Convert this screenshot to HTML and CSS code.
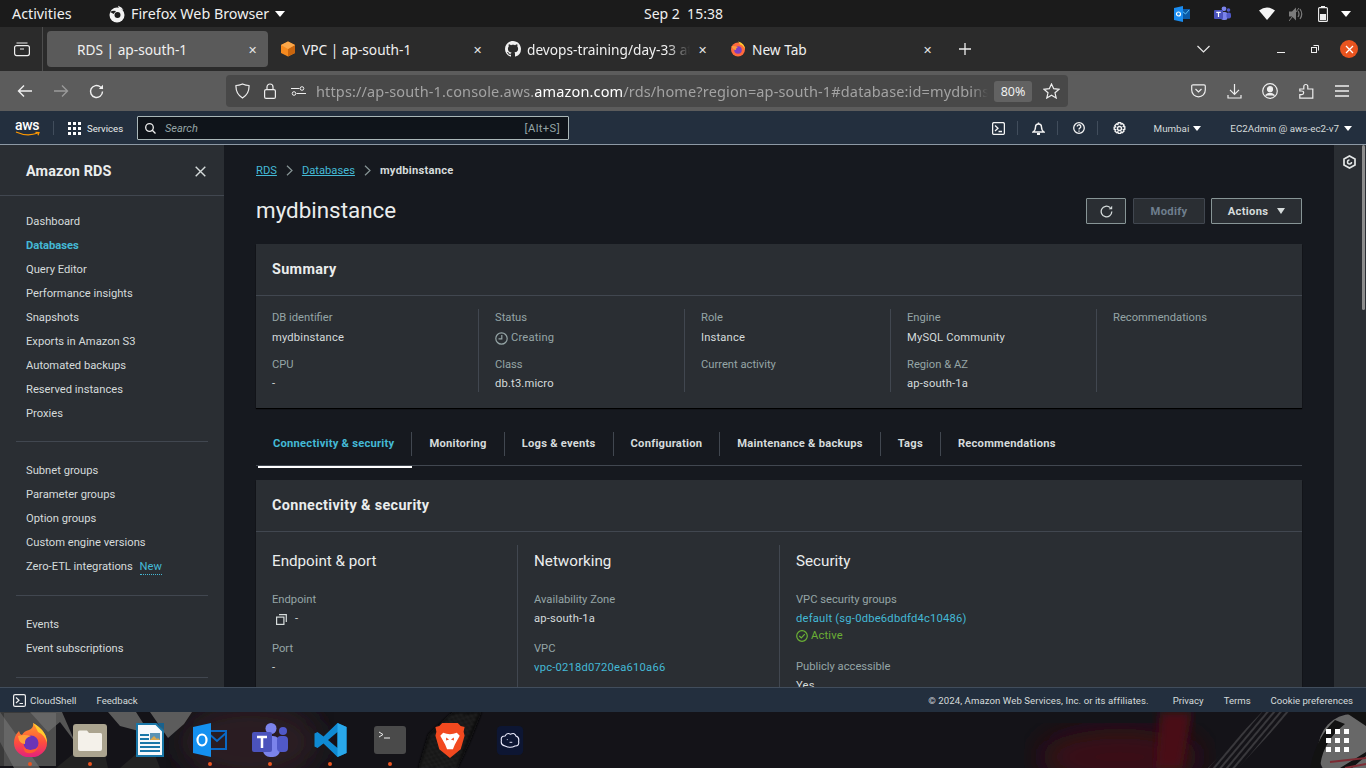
FILE: index.html
```html
<!DOCTYPE html>
<html lang="en">
<head>
    <meta charset="UTF-8">
    <title>RDS | ap-south-1</title>
    <link rel="stylesheet" href="styles.css">
</head>
<body>

<div class="topbar">
    <span class="activities">Activities</span>
    <span class="app-menu">
        <svg width="18" height="18" viewBox="0 0 18 18"><circle cx="9" cy="10" r="7.500" fill="#f2f2f2"/><circle cx="9.500" cy="10" r="3" fill="#1b1b1b"/><path d="M2 7 Q5 5 8 6 L5.500 9 L4 8z" fill="#1b1b1b"/><path d="M10 .8 Q14 2 15.500 5 L11 3.500z" fill="#f2f2f2"/></svg>
        Firefox Web Browser
        <i class="caret caret-top"></i>
    </span>
    <span class="clock">Sep 2&nbsp; 15:38</span>
    <span class="tray">
        <svg class="tray-outlook" width="16" height="16" viewBox="0 0 16 16"><rect x="6" y="3" width="10" height="10" fill="#0a5aa8"/><path d="M7 4 L11.500 8 L15 4" fill="none" stroke="#5cc0f5"/><path d="M0 2 L9 0 V16 L0 14z" fill="#1a8cf0"/><circle cx="4.500" cy="8" r="2" fill="none" stroke="#fff" stroke-width="1.200"/></svg>
        <svg class="tray-teams" width="17" height="16" viewBox="0 0 17 16"><circle cx="10" cy="2.800" r="2.400" fill="#7b83eb"/><circle cx="14.500" cy="4" r="1.800" fill="#5059c9"/><rect x="7" y="6" width="6.500" height="8" rx="2.500" fill="#7b83eb"/><rect x="12.500" y="6.500" width="4.500" height="6" rx="2" fill="#5059c9"/><rect x="0" y="4" width="9" height="9" rx="1" fill="#4b53bc"/><path d="M2.300 6.300h4.400M4.500 6.300v4.800" stroke="#fff" stroke-width="1.200"/></svg>
        <svg class="tray-wifi" width="16" height="13" viewBox="0 0 16 13"><path d="M0 3.600 Q8 -2.400 16 3.600 L8 13z" fill="#f4f4f4"/></svg>
        <svg class="tray-vol" width="15" height="14" viewBox="0 0 15 14"><path d="M0 4.500h3l4-4v13l-4-4H0z" fill="#7c7c7c"/><path d="M9 4 Q11 7 9 10M11 2 Q14.500 7 11 12" fill="none" stroke="#7c7c7c" stroke-width="1.200"/><path d="M0 14 L10 1" stroke="#7c7c7c"/></svg>
        <svg class="tray-batt" width="10" height="16" viewBox="0 0 10 16"><rect x="3" y="0" width="4" height="2" fill="#eee"/><rect x=".6" y="1.600" width="8.800" height="13.800" rx="1" fill="none" stroke="#eee" stroke-width="1.100"/><rect x="2" y="8" width="6" height="6" fill="#eee"/></svg>
        <i class="caret caret-top tray-caret"></i>
    </span>
</div>

<div class="tabbar">
    <span class="tab-view">
        <svg width="16" height="16" viewBox="0 0 16 16" fill="none" stroke="#eee" stroke-width="1.200"><rect x=".6" y="4.600" width="14.800" height="10" rx="2"/><path d="M2.500 2h11M6 8h4"/></svg>
    </span>
    <div class="tab tab-active"><span class="tab-title tab-title-rds">RDS | ap-south-1</span><span class="tab-x">&#x2715;</span></div>
    <div class="tab">
        <svg class="favicon" width="16" height="16" viewBox="0 0 16 16"><path d="M8 .5 L15 4 V12 L8 15.500 L1 12 V4z" fill="#f58a1f"/><path d="M8 8 L15 4 V12 L8 15.500z" fill="#c9650e"/><path d="M8 8 L1 4 L8 .5 L15 4z" fill="#fba74a"/></svg>
        <span class="tab-title">VPC | ap-south-1</span><span class="tab-x">&#x2715;</span>
    </div>
    <div class="tab">
        <svg class="favicon" width="16" height="16" viewBox="0 0 16 16"><path fill="#f0f0f0" d="M8 0C3.580 0 0 3.580 0 8c0 3.540 2.290 6.530 5.470 7.590.4.070.55-.17.55-.38 0-.19-.01-.82-.01-1.490-2.010.37-2.530-.49-2.690-.94-.09-.23-.48-.94-.82-1.130-.28-.15-.68-.52-.01-.53.63-.01 1.080.58 1.230.82.72 1.210 1.870.87 2.330.66.070-.52.280-.87.510-1.070-1.780-.2-3.640-.89-3.640-3.950 0-.87.310-1.590.820-2.150-.08-.2-.36-1.020.08-2.120 0 0 .67-.21 2.200.82.640-.18 1.320-.27 2-.27s1.360.09 2 .27c1.530-1.040 2.200-.82 2.200-.82.440 1.100.160 1.920.080 2.120.510.560.820 1.270.820 2.150 0 3.070-1.870 3.750-3.650 3.950.290.250.540.730.540 1.480 0 1.070-.01 1.930-.01 2.200 0 .210.150.460.550.380A8.010 8.010 0 0 0 16 8c0-4.420-3.580-8-8-8z"/></svg>
        <span class="tab-title tab-fade">devops-training/day-33 at main</span><span class="tab-x">&#x2715;</span>
    </div>
    <div class="tab">
        <svg class="favicon" width="16" height="16" viewBox="0 0 16 16"><circle cx="8" cy="8.500" r="7" fill="#ff6a3c"/><path d="M8 .5 Q14.500 2 15 8.500 Q13 4 10 3.500 Q9.500 2 8 .5z" fill="#ffcb2e"/><circle cx="8" cy="9" r="3.800" fill="#7d3fc2"/><path d="M1.500 5 Q5 4.500 8 6 Q5.500 7 6 9 Q2.500 9 1.500 5z" fill="#ff9a3d"/></svg>
        <span class="tab-title">New Tab</span><span class="tab-x">&#x2715;</span>
    </div>
    <svg class="tab-plus" width="12" height="12" viewBox="0 0 12 12"><path d="M6 0v12M0 6h12" stroke="#eee" stroke-width="1.300"/></svg>
    <svg class="tab-list" width="13" height="8" viewBox="0 0 13 8"><path d="M.5 1 L6.500 7 L12.500 1" fill="none" stroke="#e8e8e8" stroke-width="1.200"/></svg>
    <span class="win-min"></span>
    <svg class="win-max" width="8" height="8" viewBox="0 0 8 8" fill="none" stroke="#eee"><rect x=".5" y="2.500" width="5" height="5"/><path d="M2.500 .5h5v5"/></svg>
    <span class="win-close"><svg width="9" height="9" viewBox="0 0 9 9"><path d="M1 1l7 7M8 1l-7 7" stroke="#fff" stroke-width="1.300"/></svg></span>
</div>

<div class="toolbar">
    <svg class="nav-icon" width="16" height="14" viewBox="0 0 16 14" fill="none" stroke="#f0f0f0" stroke-width="1.400"><path d="M15 7H1.500M7 1.500 L1.500 7 L7 12.500"/></svg>
    <svg class="nav-icon nav-forward" width="16" height="14" viewBox="0 0 16 14" fill="none" stroke="#9a9a9a" stroke-width="1.400"><path d="M1 7h13.500M9 1.500 L14.500 7 L9 12.500"/></svg>
    <svg class="nav-icon nav-reload" width="15" height="15" viewBox="0 0 15 15" fill="none" stroke="#f0f0f0" stroke-width="1.400"><path d="M13.500 7.500A6 6 0 1 1 11.500 3L13.800 4.800"/><path d="M14 .8V5H9.800" fill="#f0f0f0" stroke="none"/></svg>
    <div class="urlbar">
        <svg class="url-shield" width="15" height="16" viewBox="0 0 15 16" fill="none" stroke="#eee" stroke-width="1.200"><path d="M7.500 1 Q11 2.500 14 2.500 Q14.500 11 7.500 15 Q.5 11 1 2.500 Q4 2.500 7.500 1z"/></svg>
        <svg class="url-lock" width="12" height="16" viewBox="0 0 12 16" fill="none" stroke="#eee" stroke-width="1.200"><rect x=".6" y="6.600" width="10.800" height="8.800" rx="1.500"/><path d="M3 6.500V4a3 3 0 0 1 6 0v2.500"/></svg>
        <svg class="url-perm" width="15" height="10" viewBox="0 0 15 10" fill="none" stroke="#eee"><circle cx="11" cy="2.500" r="1.800"/><circle cx="3" cy="7.500" r="1.800"/><path d="M0 2.500h8.500M5.500 7.500H15"/></svg>
        <span class="url-text">https://ap-south-1.console.aws.<b>amazon.com</b>/rds/home?region=ap-south-1#database:id=mydbinstance</span>
        <span class="zoom-level">80%</span>
        <svg class="url-star" width="17" height="16" viewBox="0 0 17 16" fill="none" stroke="#eee" stroke-width="1.200"><path d="M8.500 1 L10.700 5.700 L16 6.300 L12 9.800 L13.200 15 L8.500 12.300 L3.800 15 L5 9.800 L1 6.300 L6.300 5.700z"/></svg>
    </div>
    <div class="toolbar-right">
        <svg width="15" height="14" viewBox="0 0 15 14" fill="none" stroke="#eee" stroke-width="1.200"><path d="M2 .8h11a1.300 1.300 0 0 1 1.300 1.300V6A6.800 6.800 0 0 1 .7 6V2.100A1.300 1.300 0 0 1 2 .8z"/><path d="M4.500 5 L7.500 8 L10.500 5"/></svg>
        <svg width="15" height="15" viewBox="0 0 15 15" fill="none" stroke="#eee" stroke-width="1.200"><path d="M7.500 0v10M3 5.800 L7.500 10.300 L12 5.800M1 11v3h13v-3"/></svg>
        <svg width="16" height="16" viewBox="0 0 16 16" fill="none" stroke="#eee" stroke-width="1.200"><circle cx="8" cy="8" r="7.300"/><circle cx="8" cy="6.200" r="2.500" fill="#eee"/><path d="M3.500 12.500 Q8 8.500 12.500 12.500" fill="#eee"/></svg>
        <svg width="15" height="16" viewBox="0 0 15 16" fill="none" stroke="#eee" stroke-width="1.200"><path d="M.8 6h4V3.500a2 2 0 0 1 4 0V6h5v9.200H.8v-3.500h2a1.800 1.800 0 0 0 0-3.700h-2z"/></svg>
        <svg width="14" height="12" viewBox="0 0 14 12" stroke="#eee" stroke-width="1.300"><path d="M0 1h14M0 6h14M0 11h14"/></svg>
    </div>
</div>

<div class="awsnav">
    <span class="aws-logo">
        <span class="aws-word">aws</span>
        <svg width="26" height="6" viewBox="0 0 26 6" fill="none" stroke="#ff9900" stroke-width="1.200"><path d="M1 1 Q12 6 23 2"/><path d="M20.500 1.300 L24 1.500 L23 4.300"/></svg>
    </span>
    <span class="aws-sep"></span>
    <svg class="services-icon" width="13" height="13" viewBox="0 0 13 13" fill="#fff"><path d="M0 0h3v3H0zM5 0h3v3H5zM10 0h3v3h-3zM0 5h3v3H0zM5 5h3v3H5zM10 5h3v3h-3zM0 10h3v3H0zM5 10h3v3H5zM10 10h3v3h-3z"/></svg>
    <span class="services">Services</span>
    <div class="searchbox">
        <svg width="11" height="11" viewBox="0 0 11 11" fill="none" stroke="#eee" stroke-width="1.300"><circle cx="4.500" cy="4.500" r="3.800"/><path d="M7.300 7.300 L10.500 10.500"/></svg>
        <span class="search-hint">Search</span>
        <span class="search-key">[Alt+S]</span>
    </div>
    <div class="aws-right">
        <svg class="aws-icon" width="13" height="13" viewBox="0 0 13 13" fill="none" stroke="#f4f4f4" stroke-width="1.300"><rect x=".6" y=".6" width="11.800" height="11.800" rx="1.500"/><path d="M3 3.500 L6 6.200 L3 9M6.500 9.500h3.500"/></svg>
        <span class="aws-vsep"></span>
        <svg class="aws-icon" width="13" height="13" viewBox="0 0 13 13" fill="none" stroke="#f4f4f4" stroke-width="1.400"><path d="M1 10 Q3.500 8.500 3.500 5a3 3 0 0 1 6 0Q9.500 8.500 12 10z"/><path d="M5 11h3v2H5z" fill="#f4f4f4" stroke="none"/><path d="M6.500 .5v1.500"/></svg>
        <span class="aws-vsep aws-vsep-wide"></span>
        <svg class="aws-icon" width="12" height="12" viewBox="0 0 12 12" fill="none" stroke="#f4f4f4" stroke-width="1.300"><circle cx="6" cy="6" r="5.300"/><path d="M4.200 4.600a1.800 1.800 0 1 1 2.600 1.600Q6 6.600 6 7.500M6 8.500v1.200"/></svg>
        <span class="aws-vsep aws-vsep-wide"></span>
        <svg class="aws-icon" width="13" height="13" viewBox="0 0 13 13" fill="none" stroke="#f4f4f4" stroke-width="1.400"><circle cx="6.500" cy="6.500" r="2"/><path d="M5.300 .7h2.400l.4 1.500 1.300-.7 1.700 1.700-.8 1.300 1.500.4v2.400l-1.500.4.800 1.300-1.700 1.700-1.300-.8-.4 1.500H5.300l-.4-1.500-1.300.8-1.700-1.700.8-1.300-1.500-.4V5.200l1.500-.4-.8-1.300 1.700-1.700 1.300.7z"/></svg>
        <span class="aws-region">Mumbai</span><i class="caret caret-nav"></i>
        <span class="aws-user">EC2Admin @ aws-ec2-v7</span><i class="caret caret-nav"></i>
    </div>
</div>

<div class="console">
    <aside class="sidebar">
        <div class="side-head">
            <span>Amazon RDS</span>
            <svg width="11" height="11" viewBox="0 0 11 11"><path d="M.7.7l9.600 9.600M10.300.7L.7 10.300" stroke="#d5dbdb" stroke-width="1.400"/></svg>
        </div>
        <ul class="side-group">
            <li>Dashboard</li>
            <li class="side-active">Databases</li>
            <li>Query Editor</li>
            <li>Performance insights</li>
            <li>Snapshots</li>
            <li>Exports in Amazon S3</li>
            <li>Automated backups</li>
            <li>Reserved instances</li>
            <li>Proxies</li>
        </ul>
        <ul class="side-group side-group-mid">
            <li>Subnet groups</li>
            <li>Parameter groups</li>
            <li>Option groups</li>
            <li>Custom engine versions</li>
            <li>Zero-ETL integrations <span class="side-new">New</span></li>
        </ul>
        <ul class="side-group side-group-mid">
            <li>Events</li>
            <li>Event subscriptions</li>
        </ul>
    </aside>

    <main class="content">
        <div class="breadcrumb">
            <a>RDS</a>
            <svg width="7" height="11" viewBox="0 0 7 11" fill="none" stroke="#879596" stroke-width="1.200"><path d="M1 .7 L6 5.500 L1 10.300"/></svg>
            <a>Databases</a>
            <svg width="7" height="11" viewBox="0 0 7 11" fill="none" stroke="#879596" stroke-width="1.200"><path d="M1 .7 L6 5.500 L1 10.300"/></svg>
            <b>mydbinstance</b>
        </div>

        <div class="page-head">
            <h1>mydbinstance</h1>
            <div class="page-actions">
                <button class="btn btn-icon"><svg width="13" height="13" viewBox="0 0 13 13" fill="none" stroke="#d5dbdb" stroke-width="1.300"><path d="M11.800 6.500A5.300 5.300 0 1 1 10 2.500"/><path d="M12.200 .7V4.200H8.700" fill="#d5dbdb" stroke="none"/></svg></button>
                <button class="btn btn-disabled">Modify</button>
                <button class="btn btn-actions">Actions <i class="caret caret-btn"></i></button>
            </div>
        </div>

        <section class="card summary">
            <h2 class="card-title">Summary</h2>
            <div class="summary-cols">
                <div class="sum-col sum-col-first">
                    <label>DB identifier</label><p>mydbinstance</p>
                    <label>CPU</label><p>-</p>
                </div>
                <div class="sum-col sum-col-status">
                    <label>Status</label>
                    <p class="status-creating"><svg width="13" height="13" viewBox="0 0 13 13" fill="none" stroke="#95a5a6" stroke-width="1.200"><circle cx="6.500" cy="6.500" r="5.700"/><path d="M6.800 3v3.800H3.500"/></svg>Creating</p>
                    <label>Class</label><p>db.t3.micro</p>
                </div>
                <div class="sum-col sum-col-role">
                    <label>Role</label><p>Instance</p>
                    <label>Current activity</label>
                </div>
                <div class="sum-col sum-col-engine">
                    <label>Engine</label><p>MySQL Community</p>
                    <label>Region &amp; AZ</label><p>ap-south-1a</p>
                </div>
                <div class="sum-col sum-col-last">
                    <label>Recommendations</label>
                </div>
            </div>
        </section>

        <nav class="tabs">
            <a class="tabs-item tabs-selected">Connectivity &amp; security</a>
            <a class="tabs-item">Monitoring</a>
            <a class="tabs-item">Logs &amp; events</a>
            <a class="tabs-item">Configuration</a>
            <a class="tabs-item">Maintenance &amp; backups</a>
            <a class="tabs-item">Tags</a>
            <a class="tabs-item">Recommendations</a>
        </nav>

        <section class="card">
            <h2 class="card-title">Connectivity &amp; security</h2>
            <div class="conn-cols">
                <div class="conn-col">
                    <h3>Endpoint &amp; port</h3>
                    <label>Endpoint</label>
                    <p class="endpoint"><svg width="11" height="11" viewBox="0 0 11 11" fill="none" stroke="#d5dbdb" stroke-width="1.200"><rect x=".6" y="3.100" width="7.300" height="7.300"/><path d="M3 .7h7.300V8"/></svg>-</p>
                    <label>Port</label><p>-</p>
                </div>
                <div class="conn-col">
                    <h3>Networking</h3>
                    <label>Availability Zone</label><p>ap-south-1a</p>
                    <label>VPC</label><p class="link">vpc-0218d0720ea610a66</p>
                </div>
                <div class="conn-col conn-col-last">
                    <h3>Security</h3>
                    <label>VPC security groups</label>
                    <p class="link">default (sg-0dbe6dbdfd4c10486)</p>
                    <p class="active"><svg width="12" height="12" viewBox="0 0 12 12" fill="none" stroke="#6aaf35" stroke-width="1.200"><circle cx="6" cy="6" r="5.300"/><path d="M3.300 6 L5.300 8 L8.800 4.200"/></svg>Active</p>
                    <label>Publicly accessible</label><p>Yes</p>
                </div>
            </div>
        </section>
    </main>

    <div class="rail">
        <svg width="13" height="14" viewBox="0 0 13 14" fill="none" stroke="#e4e7e7" stroke-width="1.700"><path d="M6.500 1 L12 4 V10 L6.500 13 L1 10 V4z"/><path d="M8.500 7a2 2 0 1 1-2-2" stroke-width="1.500"/></svg>
        <span class="rail-scroll"></span>
    </div>
</div>

<div class="footer">
    <svg width="13" height="13" viewBox="0 0 13 13" fill="none" stroke="#eee" stroke-width="1.200"><rect x=".6" y=".6" width="11.800" height="11.800" rx="1.500"/><path d="M3 3.500 L6 6.200 L3 9M6.500 9.500h3.500"/></svg>
    <span class="foot-shell">CloudShell</span>
    <span class="foot-feedback">Feedback</span>
    <span class="foot-copy">© 2024, Amazon Web Services, Inc. or its affiliates.</span>
    <span class="foot-link foot-privacy">Privacy</span>
    <span class="foot-link">Terms</span>
    <span class="foot-link">Cookie preferences</span>
</div>

<div class="dock">
    <svg class="wallpaper" width="1366" height="56" viewBox="0 0 1366 56">
        <defs>
            <pattern id="mesh" width="7" height="5" patternUnits="userSpaceOnUse" patternTransform="rotate(20)"><path d="M0 0L7 5M7 0L0 5" stroke="#666" stroke-width=".6"/></pattern>
            <pattern id="hatch" width="5" height="5" patternUnits="userSpaceOnUse" patternTransform="rotate(-50)"><path d="M0 1h5" stroke="#8f8f8f" stroke-width=".8"/></pattern>
            <filter id="soft"><feGaussianBlur stdDeviation="5"/></filter>
            <filter id="softer"><feGaussianBlur stdDeviation="14"/></filter>
            <filter id="edge"><feGaussianBlur stdDeviation="1"/></filter>
        </defs>
        <ellipse cx="1120" cy="45" rx="80" ry="28" fill="#3a1014" filter="url(#softer)"/>
        <path d="M1160 0H1192L1182 56H1156z" fill="#4a1016" filter="url(#soft)"/>
        <ellipse cx="250" cy="30" rx="70" ry="40" fill="#2a1a24" filter="url(#softer)"/>
        <path d="M0 0H56V54H0z" fill="#3a3a3a"/>
        <path d="M0 0L40 56H14L0 30zM30 0H62L75 30L60 10L48 20z" fill="#555"/>
        <path d="M108 0H136L150 22L120 14zM150 0H192L184 12L168 26z" fill="#5c5c5c"/>
        <path d="M56 56L100 20L108 56zM120 56L150 30L160 56z" fill="#232323"/>
        <path d="M418 56L428 22L452 0H482L470 30L458 56z" fill="#0b0b0b" filter="url(#edge)"/>
        <path d="M420 56L430 24L452 2H478L466 30L456 56z" fill="url(#mesh)" opacity=".7" filter="url(#edge)"/>
        <path d="M1208 56L1262 0H1290L1238 56z" fill="url(#hatch)" opacity=".75"/>
        <ellipse cx="1352" cy="38" rx="34" ry="36" fill="#686868"/>
        <path d="M1320 56Q1322 30 1345 12L1335 8Q1316 26 1310 56zM1345 0L1366 14V0zM1340 56L1366 40V44L1352 56z" fill="#121212"/>
        <path d="M1330 50L1366 46M1345 56L1366 52" stroke="#7c2b33" stroke-width="2"/>
    </svg>
    <div class="dock-item dock-running dock-current">
        <svg width="34" height="34" viewBox="0 0 34 34"><defs><linearGradient id="ffbody" x1="0" y1="0" x2="0" y2="1"><stop offset="0" stop-color="#ff9a2e"/><stop offset=".55" stop-color="#ff4f3c"/><stop offset="1" stop-color="#e3207f"/></linearGradient></defs><path d="M20 0 Q34 8 34 20 A16.500 14.500 0 0 1 1 20 Q1 13 6 8 Q6.500 11 9 12 Q11 8 16 7 Q21 5 20 0z" fill="url(#ffbody)"/><path d="M20 0 Q34 8 34 20 Q32 12 25 9 Q23 4 20 0z" fill="#ffcb2e"/><circle cx="18" cy="20" r="7.500" fill="#6b34b8"/><path d="M5 13 Q11 11 18 13 Q11 15 12 21 Q6 21 5 13z" fill="#ffa03a"/><path d="M10 24 Q17 30 26 24 Q20 33 12 29z" fill="#ff5a30"/></svg>
    </div>
    <div class="dock-item dock-running">
        <svg width="34" height="33" viewBox="0 0 34 33"><rect width="34" height="33" rx="3" fill="#aba48f"/><path d="M5 8a1.500 1.500 0 0 1 1.500-1.500H14l2 2.500h11.500A1.500 1.500 0 0 1 29 10.500V25a2 2 0 0 1-2 2H7a2 2 0 0 1-2-2z" fill="#f4f1ea"/></svg>
    </div>
    <div class="dock-item">
        <svg width="28" height="34" viewBox="0 0 28 34"><path d="M1 1h19l7 7v25H1z" fill="#f7f9fb" stroke="#1a77a8" stroke-width="2"/><path d="M21 0 L28 7 V0z" fill="#18618d"/><rect x="4" y="11" width="9" height="2" fill="#1a77a8"/><rect x="4" y="15" width="9" height="2" fill="#1a77a8"/><rect x="4" y="19" width="20" height="2" fill="#1a77a8"/><rect x="4" y="23" width="20" height="2" fill="#1a77a8"/><rect x="4" y="27" width="20" height="2" fill="#1a77a8"/><rect x="14" y="10" width="10" height="7" fill="#5a93b5"/><path d="M14 17 L18 13 L21 16 L22 15 L24 17z" fill="#d9a64b"/></svg>
    </div>
    <div class="dock-item dock-running">
        <svg width="34" height="34" viewBox="0 0 34 34"><rect x="14" y="8" width="19" height="18" fill="none" stroke="#0a68c4" stroke-width="2"/><path d="M15 10 L24 18 L33 10" fill="none" stroke="#0a68c4" stroke-width="2"/><path d="M0 4 L18 0 V34 L0 30z" fill="#1490f0"/><ellipse cx="9" cy="17" rx="4.500" ry="5.500" fill="none" stroke="#fff" stroke-width="2.200"/></svg>
    </div>
    <div class="dock-item dock-running">
        <svg width="36" height="34" viewBox="0 0 36 34"><circle cx="19" cy="5.500" r="5.500" fill="#7b83eb"/><circle cx="31" cy="8" r="4" fill="#5059c9"/><rect x="11" y="13" width="17" height="21" rx="7" fill="#7b83eb"/><rect x="25" y="13" width="11" height="16" rx="4" fill="#5059c9"/><rect x="0" y="9" width="20" height="20" rx="2" fill="#4b53bc"/><path d="M5 14h10M10 14v11" stroke="#fff" stroke-width="2.500"/></svg>
    </div>
    <div class="dock-item dock-running">
        <svg width="33" height="34" viewBox="0 0 32 34"><path d="M23 0 L32 4 V30 L23 34 L9 20.500 L3 25 L0 23.500 V10.500 L3 9 L9 13.500z M23 9 L13.500 17 L23 25z" fill="#0f8ad3" fill-rule="evenodd"/><path d="M23 0 L32 4 V30 L23 34 V25z" fill="#29a8eb"/></svg>
    </div>
    <div class="dock-item dock-running">
        <svg width="32" height="28" viewBox="0 0 32 28"><rect width="32" height="28" rx="3" fill="#4a4a4a"/><path d="M5 6 L9 8.500 L5 11" fill="none" stroke="#eee"/><path d="M10 12h6" stroke="#eee"/></svg>
    </div>
    <div class="dock-item">
        <svg width="30" height="35" viewBox="0 0 30 36"><path d="M7 0h16l3 3 4 1-1 5 1 4-4 14-11 9-11-9L0 13l1-4-1-5 4-1z" fill="#f2491f"/><path d="M8 10 Q15 13 22 10 L25 13 L20 22 L18 27 H12 L10 22 L5 13z" fill="#fff"/><path d="M11 15l3 2-3 1zM19 15l-3 2 3 1z" fill="#f2491f"/></svg>
    </div>
    <div class="dock-item">
        <svg width="28" height="29" viewBox="0 0 29 32"><rect width="29" height="32" rx="5" fill="#0d1633"/><path d="M9 22 Q4 21 5 16 Q4 11 9 11 Q11 7 15 9 Q20 7 21 11 Q25 12 24 17 Q25 22 20 22 Q15 25 9 22z" fill="none" stroke="#eef" stroke-width="1.200"/><path d="M11 15h1M14 18h3" stroke="#eef"/></svg>
    </div>
    <svg class="dock-apps" width="23" height="23" viewBox="0 0 23 23" fill="#fff"><rect x="0" y="0" width="5" height="5"/><rect x="9" y="0" width="5" height="5"/><rect x="18" y="0" width="5" height="5"/><rect x="0" y="9" width="5" height="5"/><rect x="9" y="9" width="5" height="5"/><rect x="18" y="9" width="5" height="5"/><rect x="0" y="18" width="5" height="5"/><rect x="9" y="18" width="5" height="5"/><rect x="18" y="18" width="5" height="5"/></svg>
</div>

</body>
</html>
```

FILE: styles.css
```css
* {
    box-sizing: border-box;
}
html, body {
    margin: 0;
    height: 768px;
    overflow: hidden;
}
body {
    width: 1366px;
    display: flex;
    flex-direction: column;
    font-family: Roboto, "Noto Sans", sans-serif;
    font-size: 11.2px;
    background: #16191f;
    color: #d5dbdb;
}
.caret {
    display: inline-block;
    width: 0;
    height: 0;
    border-left: 5px solid transparent;
    border-right: 5px solid transparent;
    border-top: 6px solid #fff;
}

/* gnome top bar */
.topbar {
    height: 27px;
    flex: none;
    display: flex;
    align-items: center;
    background: #1b1b1b;
    color: #f0f0f0;
    font-family: "Noto Sans", sans-serif;
    font-size: 14.300px;
    padding-left: 12px;
    position: relative;
}
.activities {
    width: 96px;
}
.app-menu {
    display: flex;
    align-items: center;
    gap: 5px;
}
.caret-top {
    margin-left: 1px;
}
.clock {
    position: absolute;
    left: 644px;
    font-size: 14px;
}
.tray {
    margin-left: auto;
    display: flex;
    align-items: center;
}
.tray-outlook { margin-right: 24px; }
.tray-teams { margin-right: 28px; }
.tray-wifi { margin-right: 14px; }
.tray-vol { margin-right: 14px; }
.tray-batt { margin-right: 13px; }
.tray-caret { margin-right: 15px; margin-left: 0; }

/* firefox tabs */
.tabbar {
    height: 44px;
    flex: none;
    display: flex;
    align-items: center;
    background: #2b2b2b;
    color: #f0f0f0;
    font-family: "Noto Sans", sans-serif;
    font-size: 13.700px;
}
.tab-view {
    width: 43px;
    height: 44px;
    display: flex;
    align-items: center;
    justify-content: center;
    border-right: 1px solid #4d4d4d;
    padding-left: 2px;
}
.tab {
    width: 221px;
    height: 36px;
    margin-left: 4px;
    display: flex;
    align-items: center;
    padding-left: 8px;
    border-radius: 4px;
    flex: none;
}
.tab-active {
    background: #5a5a5a;
}
.tab-title {
    margin-left: 6px;
    white-space: nowrap;
    overflow: hidden;
    width: 169px;
}
.tab-title-rds {
    margin-left: 22px;
    width: 169px;
}
.tab-fade {
    -webkit-mask-image: linear-gradient(to right, #000 140px, transparent 163px);
    mask-image: linear-gradient(to right, #000 140px, transparent 163px);
}
.tab-x {
    font-size: 11px;
    color: #e4e4e4;
    margin-left: 2px;
}
.tab-plus {
    margin-left: 16px;
}
.tab-list {
    margin-left: 226px;
}
.win-min {
    width: 8px;
    height: 1px;
    background: #eee;
    margin-left: 67px;
    margin-top: 7px;
}
.win-max {
    margin-left: 26px;
}
.win-close {
    width: 18px;
    height: 18px;
    border-radius: 50%;
    background: #e9541f;
    margin-left: 21px;
    display: flex;
    align-items: center;
    justify-content: center;
}

/* firefox toolbar */
.toolbar {
    height: 40px;
    flex: none;
    display: flex;
    align-items: center;
    background: #5c5c5c;
    padding-left: 17px;
}
.nav-forward {
    margin-left: 20px;
}
.nav-reload {
    margin-left: 20px;
    margin-right: 123px;
}
.urlbar {
    width: 842px;
    height: 32px;
    background: #484848;
    border-radius: 4px;
    display: flex;
    align-items: center;
    font-family: "Noto Sans", sans-serif;
    font-size: 14.500px;
    color: #a3a3a3;
    padding-left: 9px;
    flex: none;
    margin-left: -1px;
}
.url-lock {
    margin-left: 14px;
}
.url-perm {
    margin-left: 15px;
}
.url-text {
    margin-left: 10px;
    width: 672px;
    flex: none;
    white-space: nowrap;
    overflow: hidden;
    letter-spacing: .14px;
    -webkit-mask-image: linear-gradient(to right, #000 655px, transparent 672px);
    mask-image: linear-gradient(to right, #000 655px, transparent 672px);
}
.url-text b {
    font-weight: 400;
    color: #fff;
}
.zoom-level {
    width: 38px;
    height: 21px;
    background: #626262;
    border-radius: 3px;
    color: #f0f0f0;
    font-size: 12.500px;
    display: flex;
    align-items: center;
    justify-content: center;
    margin-left: 6px;
}
.url-star {
    margin-left: 11px;
}
.toolbar-right {
    display: flex;
    align-items: center;
    gap: 20.700px;
    margin-left: 123px;
}

/* aws console nav */
.awsnav {
    height: 34px;
    flex: none;
    display: flex;
    align-items: center;
    background: #232f3e;
    border-bottom: 1px solid #8d99a5;
    color: #eaeded;
    padding: 1px 0 0 15px;
}
.aws-logo {
    display: flex;
    flex-direction: column;
    width: 26px;
    align-items: flex-start;
    line-height: 11px;
}
.aws-word {
    font-size: 14px;
    font-weight: 500;
    color: #fff;
    letter-spacing: -.3px;
}
.aws-sep {
    width: 1px;
    height: 14px;
    background: #414d5c;
    margin-left: 12px;
}
.services-icon {
    margin-left: 14px;
}
.services {
    margin-left: 6px;
    font-size: 9.600px;
    width: 50px;
}
.searchbox {
    width: 432px;
    height: 24px;
    background: #0f141a;
    border: 1px solid #aab7b8;
    border-radius: 1px;
    display: flex;
    align-items: center;
    padding: 0 8px 0 7px;
}
.search-hint {
    margin-left: 9px;
    font-style: italic;
    font-size: 11px;
    color: #95a5a6;
}
.search-key {
    margin-left: auto;
    font-size: 11.200px;
    letter-spacing: .4px;
    color: #95a5a6;
}
.aws-right {
    margin-left: auto;
    display: flex;
    align-items: center;
    padding-right: 14px;
}
.aws-vsep {
    width: 1px;
    height: 14px;
    background: #414d5c;
    margin: 0 14px 0 12px;
}
.aws-vsep-wide {
    margin-right: 15px;
}
.aws-region {
    margin-left: 28px;
    font-size: 9.800px;
    color: #d5dbdb;
    margin-right: 4px;
}
.aws-user {
    margin-left: 29px;
    font-size: 9.800px;
    color: #d5dbdb;
    margin-right: 5px;
}
.caret-nav {
    border-left-width: 4px;
    border-right-width: 4px;
    border-top-width: 5px;
}

/* page */
.console {
    flex: 1;
    min-height: 0;
    display: flex;
    overflow: hidden;
}
.sidebar {
    width: 224px;
    flex: none;
    background: #2a2e33;
}
.side-head {
    height: 51px;
    display: flex;
    align-items: center;
    justify-content: space-between;
    padding: 2px 18px 0 26px;
    border-bottom: 1px solid #414750;
    font-size: 14.400px;
    font-weight: 700;
    color: #eaeded;
    letter-spacing: .15px;
}
.side-group {
    list-style: none;
    margin: 0 16px;
    padding: 14px 0 15px 10px;
    border-bottom: 1px solid #414750;
}
.side-group li {
    height: 24px;
    line-height: 24px;
    white-space: nowrap;
}
.side-group-mid {
    padding-top: 17px;
    padding-bottom: 16px;
}
.side-active {
    color: #44b9d6;
    font-weight: 700;
}
.side-new {
    color: #44b9d6;
    border-bottom: 1px dotted #44b9d6;
    padding-bottom: 1px;
    margin-left: 4px;
}

.content {
    flex: 1;
    min-width: 0;
    padding: 0 32px;
    background: #16191f;
}
.breadcrumb {
    height: 50px;
    display: flex;
    align-items: center;
    gap: 9px;
    color: #d5dbdb;
}
.breadcrumb a {
    color: #44b9d6;
    text-decoration: underline;
}
.breadcrumb b {
    color: #d5dbdb;
    letter-spacing: .25px;
}
.page-head {
    display: flex;
    align-items: center;
    justify-content: space-between;
    height: 30px;
    margin-bottom: 19px;
}
.page-head h1 {
    font-size: 22.400px;
    font-weight: 400;
    color: #eaeded;
    margin: 0;
}
.page-actions {
    display: flex;
    gap: 6px;
    margin-top: 2px;
}
.btn {
    height: 26px;
    background: #2a2e33;
    border: 1px solid #879596;
    border-radius: 1px;
    color: #d5dbdb;
    font-family: inherit;
    font-size: 11.200px;
    font-weight: 700;
    letter-spacing: .3px;
    display: flex;
    align-items: center;
    justify-content: center;
    padding: 0;
}
.btn-icon {
    width: 40px;
    margin-right: 1px;
}
.btn-disabled {
    width: 72px;
    color: #6f7f8e;
    border-color: #414750;
}
.btn-actions {
    width: 91px;
    gap: 9px;
}
.caret-btn {
    border-top-color: #d5dbdb;
    border-left-width: 4.500px;
    border-right-width: 4.500px;
}

.card {
    background: #2a2e33;
    box-shadow: 0 1px 1px 0 #000;
}
.card-title {
    height: 52px;
    display: flex;
    align-items: center;
    padding-left: 16px;
    border-bottom: 1px solid #414750;
    margin: 0;
    font-size: 14.400px;
    font-weight: 700;
    letter-spacing: .35px;
    color: #eaeded;
}
.card label {
    display: block;
    color: #95a5a6;
    line-height: 14px;
}
.card p {
    margin: 0;
    line-height: 14px;
    color: #d5dbdb;
    letter-spacing: .17px;
}
.summary {
    height: 164px;
}
.summary-cols {
    display: flex;
    padding-top: 13px;
}
.sum-col {
    height: 83px;
    padding: 2px 0 0 16px;
    border-right: 1px solid #414750;
}
.sum-col label {
    margin-bottom: 5px;
}
.sum-col label:first-child {
    margin-bottom: 6px;
}
.sum-col p {
    margin-bottom: 13px;
}
.sum-col-first { width: 223px; }
.sum-col-status { width: 206px; }
.sum-col-role { width: 206px; }
.sum-col-engine { width: 206px; }
.sum-col-last { border-right: none; }
.status-creating {
    display: flex;
    align-items: center;
    gap: 3px;
}
.card p.status-creating {
    color: #95a5a6;
}

.tabs {
    height: 44px;
    margin: 14px 0;
    display: flex;
    align-items: center;
    border-bottom: 1px solid #414750;
}
.tabs-item {
    height: 24px;
    display: flex;
    align-items: center;
    padding: 0 17px;
    border-right: 1px solid #414750;
    font-weight: 700;
    letter-spacing: .23px;
    color: #d5dbdb;
    white-space: nowrap;
}
.tabs-item:last-child {
    border-right: none;
}
.tabs-selected {
    color: #44b9d6;
    position: relative;
    margin-left: 2px;
    padding-left: 15px;
}
.tabs-selected::after {
    content: "";
    position: absolute;
    left: 0;
    right: -1px;
    bottom: -12px;
    height: 2px;
    background: #fff;
}

.conn-cols {
    display: flex;
    padding-top: 13px;
}
.conn-col {
    width: 262px;
    height: 200px;
    padding-left: 16px;
    border-right: 1px solid #414750;
}
.conn-col-last {
    border-right: none;
    width: auto;
}
.conn-col h3 {
    margin: 0 0 16px;
    font-size: 15.200px;
    font-weight: 400;
    line-height: 32px;
    color: #eaeded;
}
.conn-col label {
    margin-bottom: 5px;
}
.conn-col p {
    margin-bottom: 16px;
    white-space: nowrap;
}
.card p.link {
    color: #44b9d6;
    letter-spacing: .22px;
}
.endpoint {
    display: flex;
    align-items: center;
    gap: 8px;
    padding-left: 4px;
}
.conn-col-last p.link {
    margin-bottom: 3px;
}
.card p.active {
    color: #6aaf35;
    display: flex;
    align-items: center;
    gap: 3px;
    margin-bottom: 17px;
}

.rail {
    width: 32px;
    flex: none;
    background: #2a2e33;
    padding-top: 10px;
    display: flex;
    justify-content: center;
    position: relative;
}
.rail svg {
    margin-right: 1px;
}
.rail-scroll {
    position: absolute;
    right: 1px;
    top: 0;
    width: 3px;
    height: 165px;
    background: #8d8d8d;
    border-radius: 2px;
}

/* console footer */
.footer {
    height: 25px;
    flex: none;
    display: flex;
    align-items: center;
    background: #232f3e;
    border-top: 1px solid #414d5c;
    padding: 0 13px;
    font-size: 9.600px;
    color: #d5dbdb;
}
.foot-shell {
    margin-left: 4px;
    font-size: 9.800px;
}
.foot-feedback {
    margin-left: 20px;
}
.foot-copy {
    margin-left: auto;
    letter-spacing: .07px;
}
.foot-link {
    margin-left: 20px;
}
.foot-privacy {
    margin-left: 24px;
}

/* ubuntu dock */
.dock {
    height: 56px;
    flex: none;
    display: flex;
    align-items: center;
    position: relative;
    background: #141318;
}
.wallpaper {
    position: absolute;
    left: 0;
    top: 0;
}
.dock-item {
    width: 60px;
    height: 56px;
    display: flex;
    align-items: center;
    justify-content: center;
    position: relative;
}
.dock-running::after {
    content: "";
    position: absolute;
    bottom: 2px;
    left: 28px;
    width: 4px;
    height: 4px;
    border-radius: 50%;
    background: #e95420;
}
.dock-current {
    background: linear-gradient(rgba(255, 255, 255, .1), rgba(255, 255, 255, .1)) 4px 1px / 52px 53px no-repeat;
}
.dock-apps {
    margin-left: auto;
    margin-right: 17px;
    position: relative;
}
```
